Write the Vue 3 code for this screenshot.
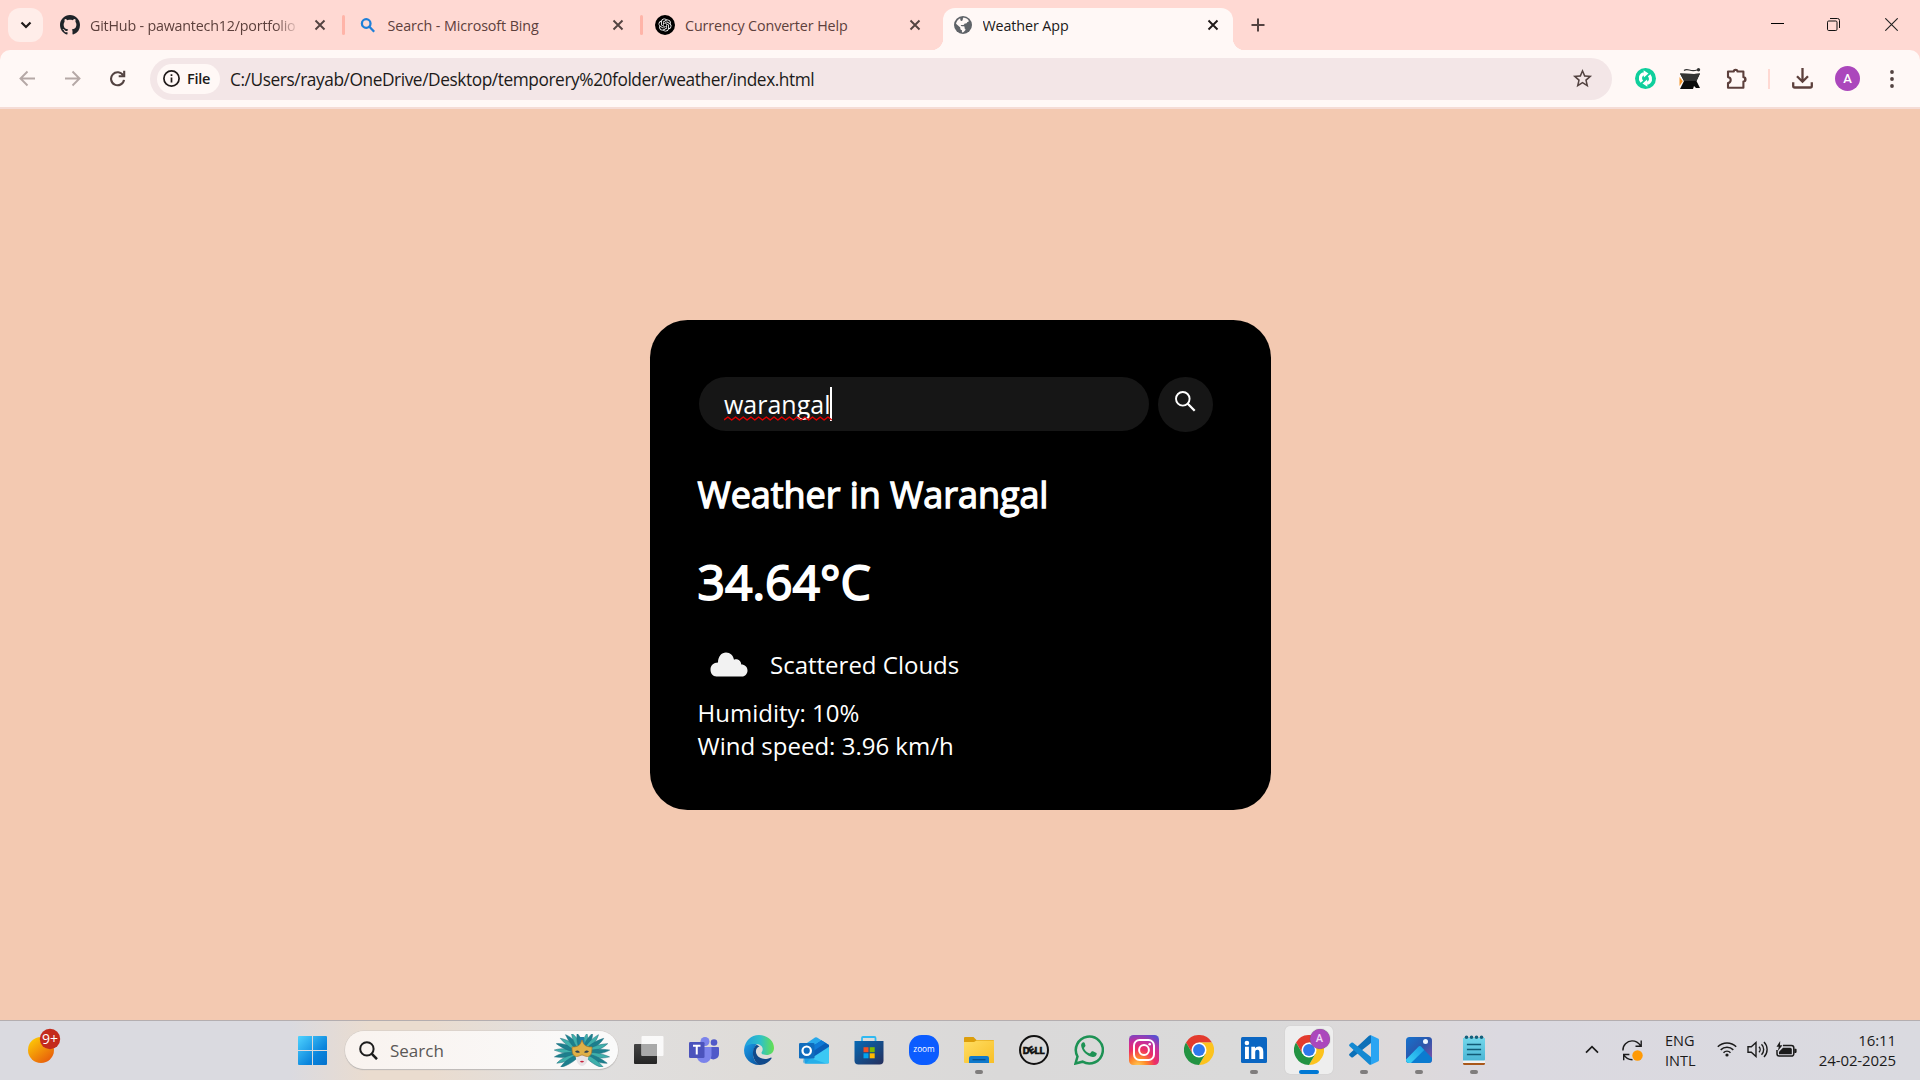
<script setup>
import { ref } from 'vue'

const city = ref('warangal')
const squiggle = 'M0 4' + 'l3.85 -3l3.85 3'.repeat(14)
const petals = [-84, -70, -56, -42, -28, -14, 14, 28, 42, 56, 70, 84, 98, 112, 124, -98, -112, -124]
</script>

<template>
  <div class="screen">
    <header class="tabstrip">
      <button class="tab-search">
        <svg width="12" height="8" viewBox="0 0 12 8"><path d="M1.5 1.5 6 6l4.5-4.5" fill="none" stroke="#201a19" stroke-width="2.2" /></svg>
      </button>
      <div class="tab">
        <span class="favicon"><svg width="20" height="20" viewBox="0 0 16 16" fill="#1f2328"><path d="M8 0C3.58 0 0 3.58 0 8c0 3.54 2.29 6.53 5.47 7.59.4.07.55-.17.55-.38 0-.19-.01-.82-.01-1.49-2.01.37-2.53-.49-2.69-.94-.09-.23-.48-.94-.82-1.13-.28-.15-.68-.52-.01-.53.63-.01 1.08.58 1.23.82.72 1.21 1.87.87 2.33.66.07-.52.28-.87.51-1.07-1.78-.2-3.64-.89-3.64-3.95 0-.87.31-1.59.82-2.15-.08-.2-.36-1.02.08-2.12 0 0 .67-.21 2.2.82.64-.18 1.32-.27 2-.27s1.36.09 2 .27c1.53-1.04 2.2-.82 2.2-.82.44 1.1.16 1.92.08 2.12.51.56.82 1.27.82 2.15 0 3.07-1.87 3.75-3.65 3.95.29.25.54.73.54 1.48 0 1.07-.01 1.93-.01 2.2 0 .21.15.46.55.38A8.01 8.01 0 0 0 16 8c0-4.42-3.58-8-8-8z" /></svg></span>
        <span class="label fade t1">GitHub - pawantech12/portfolio</span>
        <svg class="x" viewBox="0 0 12 12"><path d="m1.5 1.5 9 9m0-9-9 9" /></svg>
        <i class="sep"></i>
      </div>
      <div class="tab">
        <span class="favicon"><svg width="20" height="20" viewBox="0 0 20 20" fill="none" stroke="#1e7fd8" stroke-width="2.3"><circle cx="8.2" cy="8.5" r="4.3" /><path d="m11.4 11.8 4.8 5" /></svg></span>
        <span class="label t2">Search - Microsoft Bing</span>
        <svg class="x" viewBox="0 0 12 12"><path d="m1.5 1.5 9 9m0-9-9 9" /></svg>
        <i class="sep"></i>
      </div>
      <div class="tab">
        <span class="favicon"><svg width="20" height="20" viewBox="0 0 20 20"><circle cx="10" cy="10" r="10" /><g transform="translate(3.4 3.4) scale(.55)" fill="#fff"><path d="M22.2819 9.8211a5.9847 5.9847 0 0 0-.5157-4.9108 6.0462 6.0462 0 0 0-6.5098-2.9A6.0651 6.0651 0 0 0 4.9807 4.1818a5.9847 5.9847 0 0 0-3.9977 2.9 6.0462 6.0462 0 0 0 .7427 7.0966 5.98 5.98 0 0 0 .511 4.9107 6.051 6.051 0 0 0 6.5146 2.9001A5.9847 5.9847 0 0 0 13.2599 24a6.0557 6.0557 0 0 0 5.7718-4.2058 5.9894 5.9894 0 0 0 3.9977-2.9001 6.0557 6.0557 0 0 0-.7475-7.0729zm-9.022 12.6081a4.4755 4.4755 0 0 1-2.8764-1.0408l.1419-.0804 4.7783-2.7582a.7948.7948 0 0 0 .3927-.6813v-6.7369l2.02 1.1686a.071.071 0 0 1 .038.052v5.5826a4.504 4.504 0 0 1-4.4945 4.4944zm-9.6607-4.1254a4.4708 4.4708 0 0 1-.5346-3.0137l.142.0852 4.783 2.7582a.7712.7712 0 0 0 .7806 0l5.8428-3.3685v2.3324a.0804.0804 0 0 1-.0332.0615L9.74 19.9502a4.4992 4.4992 0 0 1-6.1408-1.6464zM2.3408 7.8956a4.485 4.485 0 0 1 2.3655-1.9728V11.6a.7664.7664 0 0 0 .3879.6765l5.8144 3.3543-2.0201 1.1685a.0757.0757 0 0 1-.071 0l-4.8303-2.7865A4.504 4.504 0 0 1 2.3408 7.872zm16.5963 3.8558L13.1038 8.364 15.1192 7.2a.0757.0757 0 0 1 .071 0l4.8303 2.7913a4.4944 4.4944 0 0 1-.6765 8.1042v-5.6772a.79.79 0 0 0-.407-.667zm2.0107-3.0231l-.142-.0852-4.7735-2.7818a.7759.7759 0 0 0-.7854 0L9.409 9.2297V6.8974a.0662.0662 0 0 1 .0284-.0615l4.8303-2.7866a4.4992 4.4992 0 0 1 6.6802 4.66zM8.3065 12.863l-2.02-1.1638a.0804.0804 0 0 1-.038-.0567V6.0742a4.4992 4.4992 0 0 1 7.3757-3.4537l-.142.0805L8.704 5.459a.7948.7948 0 0 0-.3927.6813zm1.0976-2.3654l2.602-1.4998 2.6069 1.4998v2.9994l-2.5974 1.4997-2.6067-1.4997Z" /></g></svg></span>
        <span class="label t3">Currency Converter Help</span>
        <svg class="x" viewBox="0 0 12 12"><path d="m1.5 1.5 9 9m0-9-9 9" /></svg>
      </div>
      <div class="tab active">
        <span class="favicon"><svg width="20" height="20" viewBox="0 0 20 20"><circle cx="10" cy="10" r="9" fill="#5f6368" /><path d="M10.5 2.6c2.2.3 4.300 1.500 5.400 3.300-.3.800-.9 1-1.600 1-.3 1.300-1.400 1.600-2.400 1.500-.7.1-.5 1.600-1.600 1.600H7.900c-.4.700.2 1.200 1 1.200h1.700c.7 0 1 .6 1 1.200v1.100c.7.200.9.800.9 1.500-.9 1.100-1.700 2.200-3.100 2.600-.6-.3-.5-1.800-.5-2.600-1.200 0-1.600-.8-1.600-1.600v-1L3 8.700c.5-2.500 2-4.400 4.200-5.400.2 1.200-.1 2 .8 2.600.9.300 1.700-.2 1.700-1.100 0-.9.200-1.600.8-2.200z" fill="#fff8f6" /></svg></span>
        <span class="label t4">Weather App</span>
        <svg class="x" viewBox="0 0 12 12"><path d="m1.5 1.5 9 9m0-9-9 9" /></svg>
      </div>
      <svg class="plus" width="14" height="14" viewBox="0 0 14 14"><path d="M7 .5v13M.5 7h13" stroke="#534341" stroke-width="2" /></svg>
      <div class="winctl">
        <svg width="13" height="13" viewBox="0 0 13 13"><path d="M0 5.500h13" stroke="#000" /></svg>
        <svg width="13" height="13" viewBox="0 0 13 13" fill="none" stroke="#111"><rect x=".5" y="3" width="9.500" height="9.500" rx="1.200" /><path d="M3 .5h7.500a2 2 0 0 1 2 2V10" /></svg>
        <svg width="13" height="13" viewBox="0 0 13 13"><path d="m.3.300 12.400 12.400m0-12.400L.3 12.700" stroke="#222" stroke-width="1.100" /></svg>
      </div>
    </header>

    <div class="toolbar-wrap">
      <nav class="toolbar">
        <div class="navs">
          <svg width="17" height="17" viewBox="0 0 17 17" fill="none" stroke="#b5a8a6" stroke-width="1.900"><path d="M16 8.500H2M8.500 1.500l-7 7 7 7" /></svg>
          <svg width="17" height="17" viewBox="0 0 17 17" fill="none" stroke="#b5a8a6" stroke-width="1.900"><path d="M1 8.500h14M8.500 1.500l7 7-7 7" /></svg>
          <svg width="17" height="17" viewBox="0 0 17 17" fill="none" stroke="#534341" stroke-width="2.100"><path d="M14.200 5.500A6.500 6.500 0 1 0 15 9.800" /><path d="M15.200.800v5.400H9.700" /></svg>
        </div>
        <div class="omnibox">
          <span class="chip">
            <svg width="17" height="17" viewBox="0 0 17 17"><circle cx="8.500" cy="8.500" r="7.600" fill="none" stroke="#201a19" stroke-width="1.700" /><path d="M8.500 7.500v5M8.500 4.300v1.800" stroke="#201a19" stroke-width="1.700" /></svg>
            <b>File</b>
          </span>
          <span class="url">C:/Users/rayab/OneDrive/Desktop/temporery%20folder/weather/index.html</span>
          <svg class="star" width="23" height="23" viewBox="0 0 24 24" fill="#534341"><path d="m22 9.240-7.190-.62L12 2 9.190 8.630 2 9.240l5.460 4.730L5.820 21 12 17.270 18.180 21l-1.630-7.030L22 9.240zM12 15.400l-3.760 2.270 1-4.280-3.320-2.880 4.380-.38L12 6.100l1.710 4.040 4.380.38-3.320 2.880 1 4.280L12 15.400z" /></svg>
        </div>
        <div class="exts">
          <svg width="21" height="21" viewBox="0 0 21 21"><circle cx="10.500" cy="10.500" r="10.500" fill="#0fcf9c" /><path d="M6.800 13.800C4.300 10.500 5.300 6.700 9 5.800M14.200 7.200c2.500 3.300 1.500 7.100-2.200 8" fill="none" stroke="#fff" stroke-width="3.200" /><path d="m8.600 2.200 4.900 3.400-4.600 3.900zM12.400 18.800l-4.900-3.400 4.600-3.900z" fill="#fff" /></svg>
          <svg class="e2" width="22" height="22" viewBox="0 0 22 22"><path d="M1 5.500 15 6l6-.5-3.500 7.500 3.500 7h-4l-2-2-1 3H1l4-8z" fill="#0b0b0b" /><path d="M1 5.500 15 6l6-.5-3.500 7.500H5z" fill="#333" /><path d="M.5 9v9l3.300-4.800z" fill="#f5962b" /><path d="M5 2.500c4-3 6 2 13-.5" fill="none" stroke="#333" stroke-width="1.200" /><circle cx="19.500" cy="1.800" r="1.700" fill="#333" /></svg>
          <svg class="e3" width="22" height="22" viewBox="0 0 22 22"><path d="M2 3.500h5.800a1.800 1.800 0 0 1 3.600 0h6V9.200a1.900 1.900 0 0 1 0 4.300v6.200H2v-4.600c3.600-.4 3.600-5.600 0-6z" fill="none" stroke="#5d403c" stroke-width="2.100" stroke-linejoin="round" /><path d="M7.500 3a2 2 0 0 1 4 0zM18 9.300a2 2 0 0 1 0 4.200z" fill="#5d403c" /></svg>
          <i class="vsep"></i>
          <svg width="21" height="21" viewBox="0 0 21 21" fill="none" stroke="#5d403c" stroke-width="2.300"><path d="M10.500 0v13M5 8.200l5.500 5.500L16 8.200M1.200 14.200v3.700c0 .9.700 1.600 1.600 1.600h15.400c.9 0 1.600-.7 1.600-1.600v-3.700" /></svg>
          <span class="avatar">A</span>
          <svg class="e7" width="4" height="18" viewBox="0 0 4 18" fill="#534341"><circle cx="2" cy="2" r="1.900" /><circle cx="2" cy="9" r="1.900" /><circle cx="2" cy="16" r="1.900" /></svg>
        </div>
      </nav>
    </div>

    <main class="page">
      <section class="card">
        <div class="search">
          <div class="field">
            <span class="typed">{{ city }}<svg class="squiggle" width="108" height="5" viewBox="0 0 108 5"><path :d="squiggle" fill="none" stroke="#e00000" stroke-width="1.500" stroke-linejoin="round" /></svg></span><i class="caret"></i>
          </div>
          <button class="go">
            <svg width="21" height="21" viewBox="0 0 21 21" fill="none" stroke="#fff"><circle cx="7.800" cy="7.800" r="6.800" stroke-width="1.900" /><path d="m12.500 12.500 7.200 7.200" stroke-width="2.300" /></svg>
          </button>
        </div>
        <h2>Weather in Warangal</h2>
        <h1>34.64°C</h1>
        <div class="cond">
          <svg width="38" height="25" viewBox="0 0 38 25"><path d="M6.500 24.500C2.800 24.500.5 21.500.5 17.500c0-4 3-7 7.500-7C8 4.500 11.500.5 16 .5c4.300 0 7.200 3 8 7.200 3.500-1.500 7 .8 7.300 4.800 3.500 0 6.200 2.500 6.200 6 0 3.300-2.400 6-5.500 6z" fill="#f2f2f2" /></svg>
          <span>Scattered Clouds</span>
        </div>
        <p>Humidity: 10%</p>
        <p>Wind speed: 3.96 km/h</p>
      </section>
    </main>

    <footer class="taskbar">
      <div class="widget">
        <svg width="36" height="36" viewBox="0 0 36 36">
          <defs><linearGradient id="sun" x1=".1" y1=".1" x2=".8" y2="1"><stop offset="0" stop-color="#fdc806" /><stop offset="1" stop-color="#e7590b" /></linearGradient></defs>
          <circle cx="14" cy="22" r="13" fill="url(#sun)" /><circle cx="23" cy="11" r="10.200" fill="#c42b1c" />
          <text x="23" y="16" text-anchor="middle" font-size="14" fill="#fff" font-family="Open Sans, sans-serif">9+</text>
        </svg>
      </div>
      <div class="apps">
        <svg class="start" width="29" height="29" viewBox="0 0 29 29"><defs><linearGradient id="win" x1="0" y1="0" x2="1" y2="1"><stop offset="0" stop-color="#4fd3ff" /><stop offset=".65" stop-color="#0a84dc" /><stop offset="1" stop-color="#0472cd" /></linearGradient></defs><path d="M1 0h13v14H0V1a1 1 0 0 1 1-1zm14 0h13a1 1 0 0 1 1 1v13H15zM0 15h14v14H1a1 1 0 0 1-1-1zm15 0h14v13a1 1 0 0 1-1 1H15z" fill="url(#win)" /></svg>
        <div class="searchbox">
          <svg width="19" height="19" viewBox="0 0 19 19" fill="none" stroke="#1c1c1c" stroke-width="2"><circle cx="7.900" cy="7.900" r="6.700" /><path d="m12.600 12.600 5.400 5.600" stroke-width="2.500" /></svg>
          <span>Search</span>
          <svg class="mask" width="58" height="33" viewBox="0 0 58 33">
            <g v-for="(a, i) in petals" :key="a" :transform="`translate(29 19) rotate(${a}) scale(1 ${1 + Math.abs(Math.sin(a * Math.PI / 180)) * 0.55})`">
              <path d="M0-18C3.500-13 3-7 0 0-3-7-2.500-12 0-18z" :fill="i % 2 ? '#1c7f8d' : '#3fb0ab'" stroke="#1f6f80" stroke-width=".4" />
            </g>
            <path d="M27 3h4l1 9h-6z" fill="#2180a5" />
            <path d="M22.500 20c0 7 3 12 6.500 12s6.500-5 6.500-12z" fill="#e8e3e6" />
            <path d="M19 13c3.500 0 7-.5 8.500-3.500L29 6l1.500 3.500c1.500 3 5 3.500 8.500 3.500 0 6-1 9.500-4.500 9.500-2.700 0-4-1.500-5.500-1.500s-2.800 1.500-5.500 1.500C20 22.500 19 19 19 13z" fill="#dfb047" stroke="#a9772a" stroke-width=".7" />
            <path d="M22 17.500c2-1.500 3.500-1 5 .8-2 .9-3.500.8-5-.8zm14 0c-2-1.500-3.500-1-5 .8 2 .9 3.500.8 5-.8z" fill="#334452" /><path d="M26.800 27.500c1.500-.9 2.900-.9 4.400 0-1.500 1.400-2.900 1.400-4.400 0z" fill="#c9203a" />
          </svg>
        </div>

        <div class="app"><svg width="30" height="30" viewBox="0 0 30 30"><defs><linearGradient id="tv" x1="0" y1="0" x2="0" y2="1"><stop offset="0" stop-color="#444" /><stop offset="1" stop-color="#252525" /></linearGradient></defs><rect y="9" width="23" height="20" rx="1" fill="url(#tv)" /><rect x="7.500" y="1" width="22" height="20" rx="1" fill="#fff" fill-opacity=".82" /><path d="M7.500 9H23v12H8.500a1 1 0 0 1-1-1z" fill="#a9a9a9" /></svg></div>
        <div class="app"><svg width="30" height="30" viewBox="0 0 30 30"><circle cx="25" cy="7.500" r="3.300" fill="#5059c9" /><path d="M20 12h9a1 1 0 0 1 1 1v6a5.500 5.500 0 0 1-10 3z" fill="#5059c9" /><circle cx="16" cy="6.500" r="4.500" fill="#7b83eb" /><path d="M10 12h12.500v8.500a7.500 7.500 0 0 1-15 0z" fill="#7b83eb" /><rect y="7" width="15.500" height="16" rx="1.300" fill="#4b53bc" /><path d="M4 10.800h7.500M7.750 10.800V19.500" stroke="#fff" stroke-width="2" /></svg></div>
        <div class="app"><svg width="30" height="30" viewBox="0 0 30 30"><defs><linearGradient id="e1" x1="0" y1=".3" x2="1" y2=".3"><stop offset="0" stop-color="#1f9de0" /><stop offset=".55" stop-color="#2fc1c7" /><stop offset="1" stop-color="#66e04e" /></linearGradient><linearGradient id="e2" x1="0" y1="0" x2=".8" y2="1"><stop offset="0" stop-color="#1a9be8" /><stop offset="1" stop-color="#0c59a4" /></linearGradient></defs><path d="M.2 14C1 6 7 0 15 0c8.500 0 15 6 15 13 0 4.500-3.500 7-7.500 7-3.200 0-5-.9-5-2.200 0-1 1.200-1.500 1.200-3.800 0-2.700-2.700-4.800-6-4.800C8 9.200 3 11 .2 14z" fill="url(#e1)" /><path d="M12.700 9.200C6 8 1 10.500.1 14.500-.5 23 6.500 30 15 30c1.300 0-3.500-2-4.800-5.500C8 19 9.500 12.500 12.700 9.200z" fill="url(#e2)" /><path d="M12.700 9.700c-3.600 2.500-5 8.800-2.700 14C11.500 27.500 14 30 15.500 30c5 0 9.500-2.600 12-6.500.4-.8-.2-1.200-.9-.8C18 26.500 11 21 12 15.500c.3-2 1.500-3.500 3.500-4z" fill="#114a8b" /></svg></div>
        <div class="app"><svg width="30" height="30" viewBox="0 0 30 30"><path d="M3.500 11 16 2.500a2 2 0 0 1 2 0L30 10v17a1.500 1.500 0 0 1-1.500 1.500H6z" fill="#28a8ea" /><path d="M14 20.500 30 11v16a1.500 1.500 0 0 1-1.500 1.500H7z" fill="#3cc8f4" /><path d="M11 13 22.500 5.500 30 10v1.800L15 21.500z" fill="#0a5fb8" /><path d="M11 13 22.500 5.500l4 2.400L13 17z" fill="#0f7ad6" /><path d="m5 21 22 7.500H6a2 2 0 0 1-2-2z" fill="#149be0" opacity=".55" /><rect y="8" width="15.500" height="15.500" rx="1.300" fill="#0f6cbd" /><circle cx="7.700" cy="15.700" r="4.200" fill="none" stroke="#fff" stroke-width="2.200" /></svg></div>
        <div class="app"><svg width="30" height="30" viewBox="0 0 30 30"><defs><linearGradient id="st" x1="0" y1="0" x2="1" y2="1"><stop offset="0" stop-color="#0669b5" /><stop offset="1" stop-color="#262f5c" /></linearGradient></defs><path d="M8 6V3a1 1 0 0 1 1-1h11.500a1 1 0 0 1 1 1v3" fill="none" stroke="#30b9f1" stroke-width="1.800" /><path d="M.5 6h29v19.500a4 4 0 0 1-4 4h-21a4 4 0 0 1-4-4z" fill="url(#st)" /><path d="M9.500 12.200h5v5h-5z" fill="#f25022" /><path d="M15.700 12.200h5v5h-5z" fill="#7fba00" /><path d="M9.500 18.300h5v5h-5z" fill="#00a4ef" /><path d="M15.700 18.300h5v5h-5z" fill="#ffb900" /></svg></div>
        <div class="app"><svg width="30" height="30" viewBox="0 0 30 30"><rect width="30" height="30" rx="12.500" fill="#0b5cff" /><text x="15" y="17.300" text-anchor="middle" font-size="8.500" font-weight="500" textLength="21.500" lengthAdjust="spacingAndGlyphs" fill="#fff" font-family="Open Sans, sans-serif">zoom</text></svg></div>
        <div class="app dot"><svg width="30" height="30" viewBox="0 0 30 30"><defs><linearGradient id="fo" x1="0" y1="0" x2="1" y2="1"><stop offset="0" stop-color="#ffdd62" /><stop offset="1" stop-color="#f8bf27" /></linearGradient></defs><path d="M0 3a1 1 0 0 1 1-1h8.500l3 3H29a1 1 0 0 1 1 1v5H0z" fill="#dc9e0c" /><path d="M0 7h10l2.500-1.500H30V28H1a1 1 0 0 1-1-1z" fill="url(#fo)" /><path d="M5 28v-5a2 2 0 0 1 2-2h16a2 2 0 0 1 2 2v5z" fill="#0f79cc" /><path d="M8.500 24.700h13" stroke="#084c86" stroke-width="1.200" /></svg></div>
        <div class="app"><svg width="30" height="30" viewBox="0 0 30 30"><circle cx="15" cy="15" r="14" fill="none" stroke="#111" stroke-width="2" /><g font-family="Inter, sans-serif" font-size="9.500" font-weight="800" fill="#111" stroke="#111" stroke-width=".4"><text x="3.700" y="18.500">D</text><text x="9.600" y="18.500" transform="rotate(-32 12.500 15)">E</text><text x="15.500" y="18.500">L</text><text x="20.600" y="18.500">L</text></g></svg></div>
        <div class="app"><svg width="30" height="30" viewBox="0 0 30 30"><path d="M1.500 28.500 3.500 21.500A13.500 13.500 0 1 1 8.600 26.700z" fill="none" stroke="#1d9254" stroke-width="2.500" /><path d="M10.700 8c-.5-1-1-.9-1.700-.7C7.500 8 7 9.500 7.200 11c1 5.500 6 10 11.500 11 2 .2 3.700-.9 4-3 .1-.7-.1-.9-.7-1.200l-3-1.500c-.6-.3-1-.2-1.400.3l-1.200 1.500c-.4.400-.7.400-1.200.2-2.300-1-4-2.700-5-4.600-.3-.5-.2-.8.100-1.200l1-1.200c.2-.3.300-.6.100-1z" fill="#1d9254" /></svg></div>
        <div class="app"><svg width="30" height="30" viewBox="0 0 30 30"><defs><radialGradient id="ig" cx=".3" cy="1.050" r="1.150"><stop offset="0" stop-color="#ffd25a" /><stop offset=".25" stop-color="#ff8a2a" /><stop offset=".5" stop-color="#ee2f63" /><stop offset=".75" stop-color="#c42f9e" /><stop offset="1" stop-color="#5a4fd0" /></radialGradient></defs><rect width="30" height="30" rx="4.500" fill="url(#ig)" /><g fill="none" stroke="#fff" stroke-width="2"><rect x="5" y="5" width="20" height="20" rx="5.500" /><circle cx="15" cy="15" r="4.900" /></g><circle cx="20.700" cy="9.300" r="1.300" fill="#fff" /></svg></div>
        <div class="app"><svg width="30" height="30" viewBox="0 0 48 48"><path d="M24 12h20.800A24 24 0 0 0 3.200 12l10.400 18z" fill="#e33b2e" /><path d="M34.400 30 24 48A24 24 0 0 0 44.800 12H24z" fill="#fcc31e" /><path d="M13.600 30 3.200 12A24 24 0 0 0 24 48l10.400-18z" fill="#229342" /><circle cx="24" cy="24" r="12" fill="#fff" /><circle cx="24" cy="24" r="9.500" fill="#2f78ec" /></svg></div>
        <div class="app dot"><svg width="30" height="30" viewBox="0 0 30 30"><rect x="2" y="2" width="26" height="26" rx="1.500" fill="#0a66c2" /><circle cx="7.900" cy="8" r="2.300" fill="#fff" /><path d="M6 11.700h3.900V24H6zM12.300 11.700H16v1.700c.8-1.300 2-2 3.900-2 3.600 0 4.400 2.400 4.400 5.600v7h-3.900v-6.200c0-1.600-.1-3-2-3s-2.200 1.300-2.200 3V24h-3.900z" fill="#fff" /></svg></div>
        <div class="app current"><svg width="30" height="30" viewBox="0 0 48 48"><path d="M24 12h20.800A24 24 0 0 0 3.200 12l10.400 18z" fill="#e33b2e" /><path d="M34.400 30 24 48A24 24 0 0 0 44.800 12H24z" fill="#fcc31e" /><path d="M13.600 30 3.200 12A24 24 0 0 0 24 48l10.400-18z" fill="#229342" /><circle cx="24" cy="24" r="12" fill="#fff" /><circle cx="24" cy="24" r="9.500" fill="#2f78ec" /></svg><b class="badge">A</b></div>
        <div class="app dot"><svg width="30" height="30" viewBox="0 0 30 30"><path d="M22 .3 29 3.500a1.500 1.500 0 0 1 1 1.400v20.200a1.500 1.500 0 0 1-1 1.400L22 29.700z" fill="#2aa5f3" /><path d="m22 8-18 14.300a1.400 1.400 0 0 1-1.700 0L.6 20.700a1.300 1.300 0 0 1 0-1.900L20 .8A2 2 0 0 1 22 .3z" fill="#0c70b8" /><path d="M22 22 4 7.700a1.400 1.400 0 0 0-1.700 0L.6 9.300a1.300 1.300 0 0 0 0 1.900L20 29.200a2 2 0 0 0 2 .5z" fill="#1489d2" /></svg></div>
        <div class="app dot"><svg width="30" height="30" viewBox="0 0 30 30"><defs><linearGradient id="ph" x1="0" y1="0" x2="1" y2="1"><stop offset="0" stop-color="#1673ce" /><stop offset=".5" stop-color="#2b55ab" /><stop offset="1" stop-color="#8a4fa8" /></linearGradient><linearGradient id="mt" x1="0" y1="1" x2="1" y2="0"><stop offset="0" stop-color="#3ed4f7" /><stop offset="1" stop-color="#169be4" /></linearGradient></defs><rect x="2" y="2" width="26" height="26" rx="3.500" fill="url(#ph)" /><circle cx="21.500" cy="6.500" r="2.500" fill="#eef6ff" /><path d="m2 24.500 12.500-12.700a1.900 1.900 0 0 1 2.700 0L28 23v1.500a3.500 3.500 0 0 1-3.500 3.500h-19A3.500 3.500 0 0 1 2 24.500z" fill="#0b7bd0" /><path d="m2 24.500 12.500-12.700a1.900 1.900 0 0 1 2.700 0l3 3.200L7 28H5.500A3.500 3.500 0 0 1 2 24.500z" fill="url(#mt)" /></svg></div>
        <div class="app dot"><svg width="30" height="32" viewBox="0 0 30 32"><path d="M4 28h22v1.500a1.500 1.500 0 0 1-1.500 1.500h-19A1.500 1.500 0 0 1 4 29.500z" fill="#a9581a" /><defs><linearGradient id="np" x1="0" y1="0" x2="0" y2="1"><stop offset="0" stop-color="#72d6ea" /><stop offset="1" stop-color="#48b4d4" /></linearGradient></defs><path d="M4 4h22v21a3 3 0 0 1-3 3H4z" fill="url(#np)" /><path d="M4 26.500h22V29H4z" fill="#f2f2f2" /><path d="M7.900 10.500h14.200M7.900 15.500h14.200M7.900 20.500h14.200" stroke="#125a75" stroke-width="1.700" /><g fill="#14607c"><circle cx="7.500" cy="3.300" r="1.800" /><circle cx="12.500" cy="3.300" r="1.800" /><circle cx="17.500" cy="3.300" r="1.800" /><circle cx="22.500" cy="3.300" r="1.800" /></g></svg></div>
      </div>
      <div class="tray">
        <svg width="14" height="9" viewBox="0 0 14 9"><path d="m1 7.700 6-6 6 6" fill="none" stroke="#1b1b1b" stroke-width="1.700" /></svg>
        <svg class="sync" width="21" height="21" viewBox="0 0 21 21" fill="none" stroke="#1b1b1b" stroke-width="1.400"><path d="M.9 10.500C.7 5 5 .9 10 .9c3.700 0 6.800 2 8.800 5M19.200.5v5.700h-5.700M1.700 20.300v-5.800h5.700M1.700 14.500c1.700 3.300 4.800 5.200 8.800 5.300" /><circle cx="15.500" cy="15.500" r="5.200" fill="#ff9a05" stroke="none" /></svg>
        <div class="lang"><span>ENG</span><span>INTL</span></div>
        <svg class="wifi" width="20" height="16" viewBox="0 0 20 16" fill="none" stroke="#1b1b1b" stroke-width="1.500"><path d="M.8 5.800a13 13 0 0 1 18.400 0M3.700 8.900a9 9 0 0 1 12.600 0M6.500 11.700a5 5 0 0 1 7 0" /><circle cx="10" cy="14" r="1.600" fill="#1b1b1b" stroke="none" /></svg>
        <svg class="vol" width="21" height="17" viewBox="0 0 21 17" fill="none" stroke="#1b1b1b" stroke-width="1.400"><path d="M1 5.700h3.300L9 1.500v14l-4.700-4.200H1zM12 5.700a4 4 0 0 1 0 5.600M14.500 3.300a7.300 7.300 0 0 1 0 10.400M17 1a10.600 10.600 0 0 1 0 15" /></svg>
        <svg class="bat" width="21" height="17" viewBox="0 0 21 17"><path d="M7 4.500h8.500a2.300 2.300 0 0 1 2.300 2.300v6a2.300 2.300 0 0 1-2.300 2.300H3.200A2.300 2.300 0 0 1 1 12.800V9" fill="none" stroke="#1b1b1b" stroke-width="1.500" /><path d="M7 6.700h7.500l1.300 1v5.500H3v-2.500z" fill="#1b1b1b" /><path d="M18.300 7.700h1.500a.8.800 0 0 1 .8.800v2.600a.8.800 0 0 1-.8.800h-1.500zM4.200 0 .5 5.800h2.300L1.800 10 6.500 4.300H4z" fill="#1b1b1b" /></svg>
        <div class="clock"><span>16:11</span><span>24-02-2025</span></div>
      </div>
    </footer>
  </div>
</template>

<style>
html, body { margin: 0; overflow: hidden; }
</style>

<style scoped>
* { box-sizing: border-box; }
.screen { width: 1920px; height: 1080px; display: flex; flex-direction: column; font-family: "Open Sans", "Noto Sans", sans-serif; background: #f3c9b1; overflow: hidden; }
svg { display: block; flex: none; }
button { border: 0; padding: 0; display: grid; place-items: center; }

.tabstrip { height: 50px; flex: none; display: flex; background: #ffd9d3; padding-left: 8px; }
.tab-search { width: 35px; height: 34px; margin: 8px 2.5px 0 0; border-radius: 12px; background: #ffede9; }
.tab { position: relative; width: 297.5px; height: 50px; display: flex; align-items: center; padding-left: 14.5px; flex: none; font-size: 14.3px; letter-spacing: -.1px; color: #5d403c; }
.favicon { width: 20px; height: 20px; margin-right: 10px; flex: none; }
.label { width: 210px; flex: none; white-space: nowrap; overflow: hidden; }
.fade { letter-spacing: -.2px; -webkit-mask-image: linear-gradient(90deg, #000 88%, transparent 100%); mask-image: linear-gradient(90deg, #000 88%, transparent 100%); }
.x { width: 12px; height: 12px; margin-left: 14px; fill: none; stroke: #534341; stroke-width: 1.9; }
.sep { width: 3px; height: 20px; margin-left: 16px; flex: none; border-radius: 2px; background: #ffb4a8; }
.active { color: #201a19; }
.active .x { stroke: #201a19; }
.active > * { position: relative; }
.active::before { content: ""; position: absolute; left: 5px; top: 8px; right: 3px; height: 42px; background: #fff8f6; border-radius: 12px 12px 0 0; }
.active::after { content: ""; position: absolute; left: -7px; right: -9px; bottom: 0; height: 12px; background: radial-gradient(circle at 0 0, transparent 12px, #fff8f6 12.5px) 0 0 / 12px 12px no-repeat, radial-gradient(circle at 100% 0, transparent 12px, #fff8f6 12.5px) 100% 0 / 12px 12px no-repeat; }
.plus { margin: 18px 0 0 15px; }
.winctl { display: flex; gap: 44px; margin: 18px 22px 0 auto; }
.winctl svg:first-child { margin-right: -1px; }
.winctl svg:last-child { margin-left: 1px; }

.toolbar-wrap { flex: none; background: #ffd9d3; }
.toolbar { height: 59px; display: flex; align-items: center; background: #fff8f6; border-radius: 10px 10px 0 0; border-bottom: 2px solid #f5dcd6; }
.navs { display: flex; gap: 28px; width: 150px; padding-left: 19px; }
.omnibox { width: 1462px; height: 42px; border-radius: 21px; background: #f3e6e7; display: flex; align-items: center; padding-left: 7px; }
.chip { width: 63px; height: 30px; border-radius: 15px; background: #fff8f6; display: flex; align-items: center; gap: 7px; padding-left: 6px; font-size: 14.5px; color: #201a19; }
.chip b { font-weight: 600; letter-spacing: -.3px; margin-top: -1px; }
.url { margin: 2px 0 0 10px; font-size: 17.3px; color: #201a19; letter-spacing: -.42px; white-space: nowrap; }
.star { margin: 0 18px 0 auto; }
.exts { flex: 1; display: flex; align-items: center; padding-left: 23px; gap: 22px; }
.e2 { margin-left: 1px; }
.e3 { margin-left: 2.5px; }
.vsep { width: 2px; height: 20px; margin-left: -1.5px; background: #ffd9d3; }
.e7 { margin-left: 8px; }
.avatar { width: 25px; height: 25px; border-radius: 50%; background: #ab47bc; color: #fff; font: 500 13px/25px Roboto, sans-serif; text-align: center; }

.page { flex: 1; padding-top: 211px; }
.card { width: 621px; height: 490px; margin-left: 650px; padding: 57px 48px 0 47.5px; border-radius: 37.5px; background: #000; color: #fff; font-size: 24px; }
.search { display: flex; gap: 9px; padding-left: 1.5px; }
.field { width: 450px; height: 54px; border-radius: 27px; background: #161616; display: flex; align-items: center; padding-left: 25px; font-size: 25px; flex: none; }
.typed { position: relative; line-height: 34px; margin-top: -1px; }
.squiggle { position: absolute; left: 0; bottom: 0; }
.caret { width: 1.5px; height: 34px; background: #fff; }
.go { width: 55px; height: 55px; border-radius: 50%; background: #161616; padding-bottom: 6px; }
h2, h1 { margin: 0; font-weight: 400; -webkit-text-stroke: 1.3px #fff; }
h2 { font-size: 36px; line-height: 50px; margin-top: 38px; letter-spacing: -.05px; }
h1 { font-size: 48px; line-height: 68px; margin-top: 28px; -webkit-text-stroke-width: 1.8px; }
.cond { display: flex; align-items: center; gap: 22px; padding-left: 12.5px; margin-top: 17px; height: 62px; }
p { margin: 0; line-height: 33px; }
.cond + p { margin-top: 1px; }

.taskbar { height: 60px; flex: none; display: flex; align-items: flex-start; border-top: 1px solid #b4aeb0; background: linear-gradient(90deg, #dadae0 0, #dadae0 290px, #eadccf 370px, #eadccf 430px, #e0dfdf 560px, #dfdcd9 750px, #dad9d9 1000px, #dadada 1250px, #ddd9da 1400px, #dbd9e0 1500px, #dadae0 100%); }
.widget { width: 298px; padding: 7px 0 0 27px; }
.apps { display: flex; align-items: flex-start; flex: none; }
.start { margin-top: 15px; }
.searchbox { width: 273px; height: 38px; margin: 10px 3px 0 18px; border-radius: 19px; background: linear-gradient(90deg, #f9f3ef, #fafafa); box-shadow: 0 0 0 .5px #cfc9c5, 0 1px 1px #aaa; display: flex; align-items: center; padding-left: 14px; }
.searchbox span { font-size: 17px; margin-left: 12px; color: #5a5856; }
.mask { margin: 0 7px 0 auto; }
.app { position: relative; width: 48px; height: 48px; margin: 5px 3.5px 0; display: grid; place-items: center; border-radius: 5px; }
.app + .app { margin-left: 3.5px; }
.dot::after, .current::after { content: ""; position: absolute; left: 20px; bottom: 0; width: 8px; height: 4px; border-radius: 2px; background: #7f7d7d; }
.current { background: #eeeeee; box-shadow: 0 0 1px #bbb; }
.current::after { left: 14px; width: 20px; background: #0078d4; }
.badge { position: absolute; right: 3px; top: 3px; width: 20px; height: 20px; border-radius: 50%; background: #ab47bc; box-shadow: 0 0 1px #555; color: #f1d9f5; font: 500 11px/20px Roboto, sans-serif; text-align: center; }
.tray { flex: 1; position: relative; display: flex; align-items: flex-start; padding-left: 84px; font-size: 14.5px; line-height: 20px; color: #1b1b1b; }
.tray > svg:first-child { margin-top: 24px; }
.sync { margin: 19px 0 0 23px; }
.lang { display: flex; flex-direction: column; margin: 10px 0 0 22px; width: 30px; }
.wifi { margin: 20px 0 0 22px; }
.vol { margin: 20px 0 0 10px; }
.bat { margin: 20px 0 0 8px; }
.clock { margin: 9px 24px 0 auto; display: flex; flex-direction: column; text-align: right; font-size: 15px; letter-spacing: -.1px; }
</style>
